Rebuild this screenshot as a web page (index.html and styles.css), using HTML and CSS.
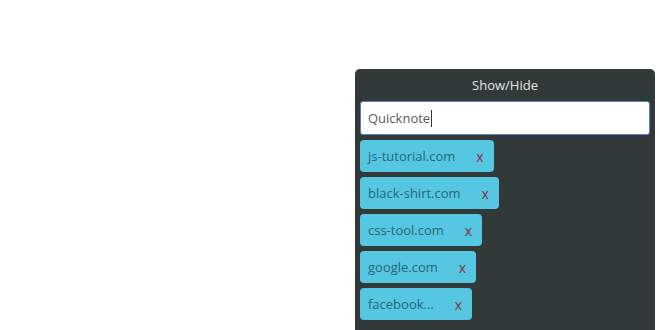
FILE: index.html
```html
<!DOCTYPE html>
<html>
<head>
<meta charset="utf-8">
<link rel="stylesheet" href="styles.css">
</head>
<body>
<div class="panel">
  <div class="title">Show/Hide</div>
  <div class="input">Quicknote<span class="caret"></span></div>
  <ul class="tags">
    <li class="tag"><span class="name">js-tutorial.com</span><span class="close">x</span></li>
    <li class="tag"><span class="name">black-shirt.com</span><span class="close">x</span></li>
    <li class="tag"><span class="name">css-tool.com</span><span class="close">x</span></li>
    <li class="tag"><span class="name">google.com</span><span class="close">x</span></li>
    <li class="tag"><span class="name">facebook...</span><span class="close">x</span></li>
  </ul>
</div>
</body>
</html>
```
FILE: styles.css
```css
html, body {
  margin: 0;
  padding: 0;
  background: #ffffff;
  overflow: hidden;
  height: 330px;
}
body {
  font-family: "Open Sans", "Noto Sans", sans-serif;
  font-size: 13px;
}
.panel {
  margin: 69px 0 0 355px;
  width: 300px;
  height: 261px;
  background: #323a39;
  border-radius: 5px 5px 0 0;
  padding: 5px 5px 0 5px;
  box-sizing: border-box;
  overflow: hidden;
}
.title {
  color: #e4e6e6;
  text-align: center;
  height: 22px;
  line-height: 22px;
  margin-bottom: 5px;
}
.input {
  background: #ffffff;
  border: 1px solid #5b7fc0;
  border-radius: 3px;
  height: 34px;
  box-sizing: border-box;
  padding: 0 7px;
  line-height: 32px;
  color: #555a5c;
  display: flex;
  align-items: center;
}
.caret {
  display: inline-block;
  width: 1px;
  height: 17px;
  background: #333;
  margin-left: 1px;
}
.tags {
  list-style: none;
  margin: 5px 0 0 0;
  padding: 0;
  display: flex;
  flex-direction: column;
  align-items: flex-start;
  gap: 5px;
}
.tag {
  background: #55c7e3;
  border-radius: 4px;
  height: 32px;
  display: flex;
  align-items: center;
  padding: 0 10px 0 8px;
  color: #2a6473;
}
.close {
  color: #8c2b3a;
  font-size: 14px;
  margin-left: 21px;
}
```
